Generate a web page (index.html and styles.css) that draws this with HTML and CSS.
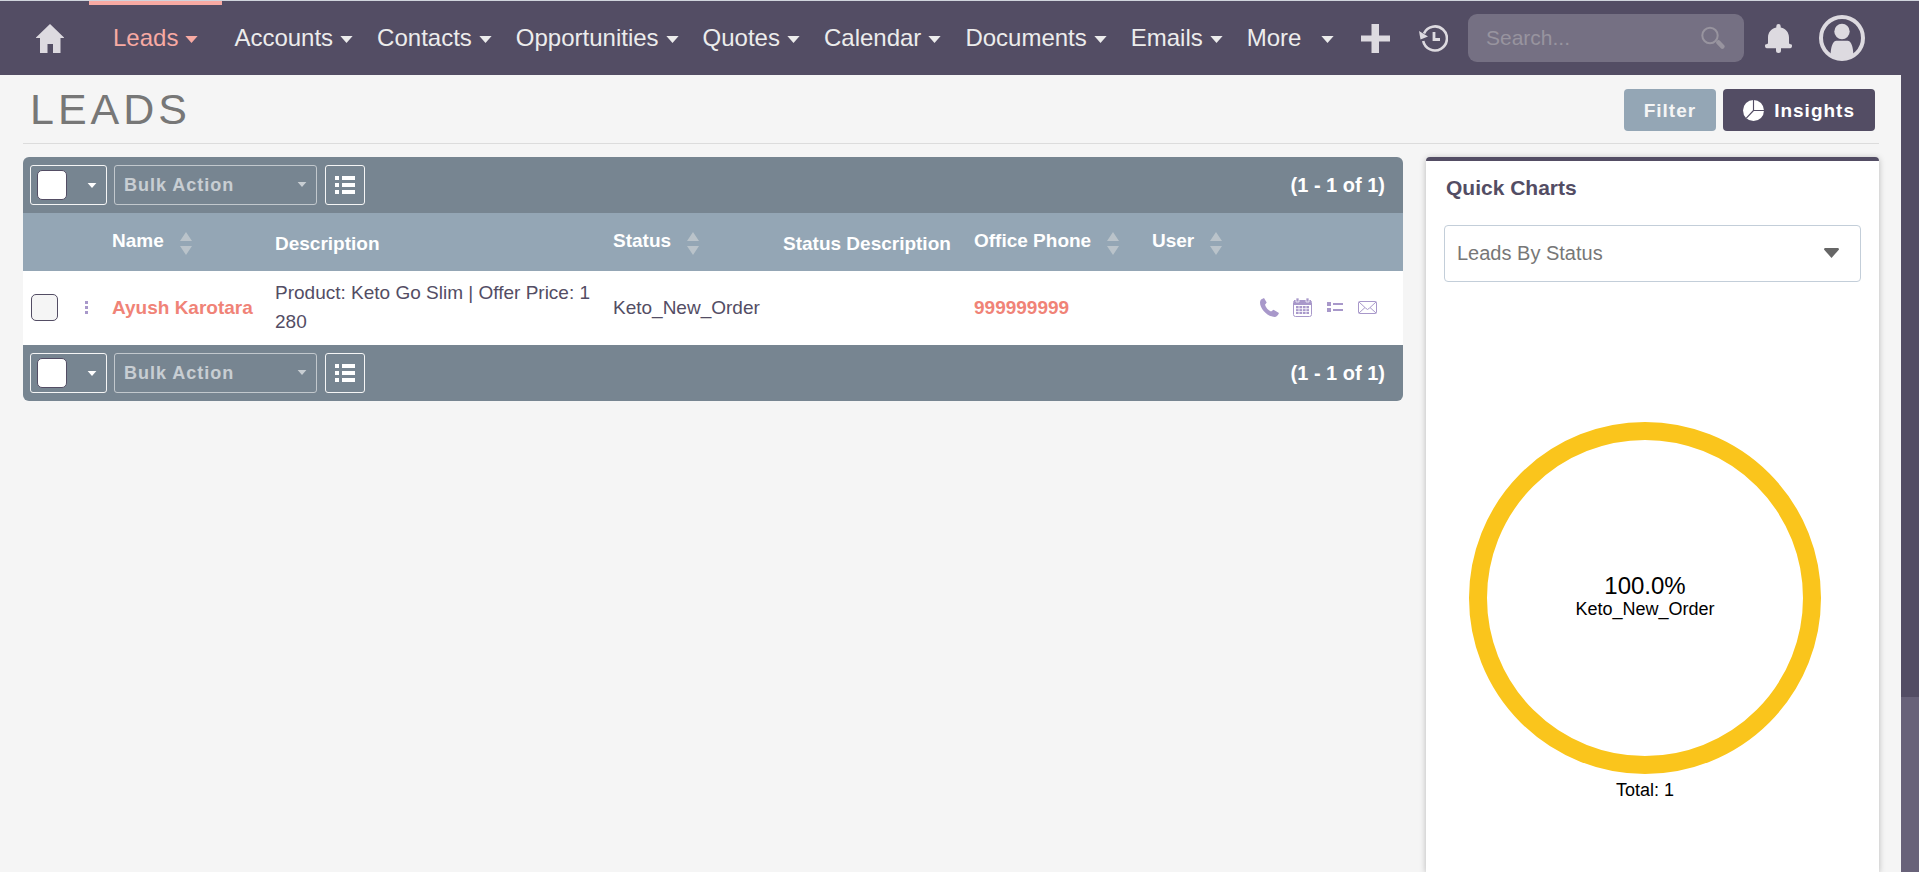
FILE: index.html
```html
<!DOCTYPE html>
<html lang="en">
<head>
<meta charset="utf-8">
<title>Leads</title>
<link rel="stylesheet" href="styles.css">
</head>
<body>
<svg class="sprite" aria-hidden="true">
  <symbol id="caret" viewBox="0 0 14 8"><path d="M0 0h14L7 8z"/></symbol>
  <symbol id="sort" viewBox="0 0 12 26"><path d="M6 2l6 9H0zM0 16h12l-6 9z"/></symbol>
  <symbol id="list" viewBox="0 0 20 18"><path d="M0 0h4v4H0zM7 0h13v4H7zM0 7h4v4H0zM7 7h13v4H7zM0 14h4v4H0zM7 14h13v4H7z"/></symbol>
</svg>

<header class="topbar">
  <a class="home" href="#" aria-label="Home">
    <svg width="28" height="29" viewBox="0 0 28 29"><path d="M14 0L28 13.500V14H24.500V29H17V20H11.500V29H4V14H0V13.500z"/></svg>
  </a>
  <nav class="nav">
    <a class="tab active" href="#">Leads<svg class="caret"><use href="#caret"/></svg></a>
    <a class="tab" href="#">Accounts<svg class="caret"><use href="#caret"/></svg></a>
    <a class="tab" href="#">Contacts<svg class="caret"><use href="#caret"/></svg></a>
    <a class="tab" href="#">Opportunities<svg class="caret"><use href="#caret"/></svg></a>
    <a class="tab" href="#">Quotes<svg class="caret"><use href="#caret"/></svg></a>
    <a class="tab" href="#">Calendar<svg class="caret"><use href="#caret"/></svg></a>
    <a class="tab" href="#">Documents<svg class="caret"><use href="#caret"/></svg></a>
    <a class="tab" href="#">Emails<svg class="caret"><use href="#caret"/></svg></a>
    <a class="tab more" href="#">More<svg class="caret"><use href="#caret"/></svg></a>
  </nav>
  <div class="tools">
    <button class="tool create" type="button" aria-label="Create">
      <svg width="29" height="29" viewBox="0 0 29 29"><path d="M10.500 0h7.500v11.500H29v6H18V29h-7.500V17.500H0v-6h10.500z"/></svg>
    </button>
    <button class="tool" type="button" aria-label="Recently viewed">
      <svg width="29" height="28" viewBox="0 0 29 28"><path d="M5 9.500A12 12 0 1 1 4.200 17" fill="none" stroke="#dddae0" stroke-width="2.600"/><path d="M0 7l1.500 8.500 7.500-3z"/><path d="M15 8v7.500h6" fill="none" stroke="#dddae0" stroke-width="2.800"/></svg>
    </button>
    <form class="search">
      <input class="search-input" type="search" placeholder="Search..." aria-label="Search">
      <button class="search-go" type="button" aria-label="Run search">
        <svg width="24" height="24" viewBox="0 0 24 24"><circle cx="9" cy="9.500" r="7.700" fill="none" stroke="#98949f" stroke-width="2"/><path d="M17.500 16.500l3.800 4" stroke="#98949f" stroke-width="4.600" stroke-linecap="round"/></svg>
      </button>
    </form>
    <button class="tool bell" type="button" aria-label="Notifications">
      <svg width="27" height="29" viewBox="0 0 27 29"><path d="M13.500 0a2.200 2.200 0 0 1 2.200 2.200V3.500c5 1 8.300 4.800 8.300 10V19.500l1.500.8c1.300 0 1.700 1 1.500 2-.2 1.200-.8 1.900-1.700 1.900H16v2.300a2.500 2.500 0 0 1-5 0V24.200H1.700C.8 24.200.2 23.500 0 22.300c-.2-1 .2-2 1.500-2L3 19.500V13.500c0-5.200 3.300-9 8.300-10V2.200A2.200 2.200 0 0 1 13.500 0z"/></svg>
    </button>
    <button class="tool" type="button" aria-label="Profile">
      <svg width="46" height="46" viewBox="0 0 46 46"><circle cx="23" cy="23" r="21" fill="none" stroke="#dddae0" stroke-width="4"/><circle cx="23" cy="16.500" r="7.700"/><path d="M11.500 41c.3-7 1.200-11 3-13.500 1-1.500 2.500-1.700 4-1.700h9c1.500 0 3 .2 4 1.700 1.800 2.500 2.700 6.500 3 13.500A22 22 0 0 1 11.500 41z"/></svg>
    </button>
  </div>
</header>

<div class="shell">
  <main class="page">
    <div class="title-row">
      <h1 class="title">LEADS</h1>
      <div class="actions">
        <button class="btn filter" type="button">Filter</button>
        <button class="btn insights" type="button">
          <svg width="21" height="21" viewBox="0 0 22 22"><circle cx="11" cy="11" r="11" fill="#fff"/><path d="M11 0v11h11M11 11l-7.500 8" fill="none" stroke="#534d64" stroke-width="1.200"/></svg>Insights</button>
      </div>
    </div>
    <div class="columns">
      <section class="list">
        <div class="bar">
          <div class="select-all">
            <input class="check big" type="checkbox" aria-label="Select all">
            <button class="drop" type="button" aria-label="Selection options"><svg class="small-caret"><use href="#caret"/></svg></button>
          </div>
          <div class="bulk">
            <select class="bulk-select" aria-label="Bulk Action"><option>Bulk Action</option></select>
            <svg class="small-caret bulk-caret"><use href="#caret"/></svg>
          </div>
          <button class="chooser" type="button" aria-label="Choose columns"><svg width="20" height="18"><use href="#list"/></svg></button>
          <span class="pager">(1 - 1 of 1)</span>
        </div>
        <table class="leads">
          <colgroup><col class="c-check"><col class="c-name"><col class="c-desc"><col class="c-status"><col class="c-sdesc"><col class="c-phone"><col class="c-user"><col class="c-icons"></colgroup>
          <thead>
            <tr>
              <td></td>
              <th><a class="sort" href="#">Name<svg><use href="#sort"/></svg></a></th>
              <th>Description</th>
              <th><a class="sort" href="#">Status<svg><use href="#sort"/></svg></a></th>
              <th>Status Description</th>
              <th><a class="sort" href="#">Office Phone<svg><use href="#sort"/></svg></a></th>
              <th><a class="sort" href="#">User<svg><use href="#sort"/></svg></a></th>
              <td></td>
            </tr>
          </thead>
          <tbody>
            <tr>
              <td class="pick"><div class="pick-row">
                <input class="check" type="checkbox" aria-label="Select Ayush Karotara">
                <button class="dots" type="button" aria-label="Row actions"><svg width="3" height="13" viewBox="0 0 3 13"><path d="M0 0h3v3H0zM0 5h3v3H0zM0 10h3v3H0z"/></svg></button>
              </div></td>
              <td><a class="link" href="#">Ayush Karotara</a></td>
              <td>Product: Keto Go Slim | Offer Price: 1 280</td>
              <td>Keto_New_Order</td>
              <td></td>
              <td><a class="link" href="#">999999999</a></td>
              <td></td>
              <td><div class="row-icons">
                <a href="#" aria-label="Log call"><svg width="19" height="19" viewBox="0 0 19 19"><path d="M1 1.500L4 0l2.700 4.500L5 6.800c.8 2.800 3 5.300 6 6.700l2.500-1.700L19 15c-.8 2.200-2.400 4-4.500 4C7.500 18.500 0 11 0 4.500 0 3.400.3 2.300 1 1.500z"/></svg></a>
                <a href="#" aria-label="Schedule meeting"><svg width="19" height="19" viewBox="0 0 19 19"><rect x=".5" y="2.500" width="18" height="16" rx="2" fill="#fff" stroke="#a898ca"/><path d="M1 2h17v5H1z"/><path d="M3 0h3v4H3zM13 0h3v4h-3z" stroke="#fff" stroke-width=".7"/><path d="M3 8h13v8H3z"/><path d="M3 10.700h13M3 13.500h13M6 8v8M9.500 8v8M13 8v8" stroke="#fff" stroke-width=".8"/></svg></a>
                <a href="#" aria-label="Create task"><svg width="18" height="12" viewBox="-1 0 18 12"><path d="M0 1h4v4H0zM6 2h10v2H6zM0 7h4v4H0zM6 8h10v2H6z"/></svg></a>
                <a href="#" aria-label="Send email"><svg width="19" height="13" viewBox="0 0 19 13"><g fill="none" stroke="#a898ca"><rect x=".5" y=".5" width="18" height="12" rx="1"/><path d="M1 1l6.500 6 2 1.500 2-1.500L18 1M1 12l6-5.500M18 12l-6-5.500"/></g></svg></a>
              </div></td>
            </tr>
          </tbody>
        </table>
        <div class="bar">
          <div class="select-all">
            <input class="check big" type="checkbox" aria-label="Select all">
            <button class="drop" type="button" aria-label="Selection options"><svg class="small-caret"><use href="#caret"/></svg></button>
          </div>
          <div class="bulk">
            <select class="bulk-select" aria-label="Bulk Action"><option>Bulk Action</option></select>
            <svg class="small-caret bulk-caret"><use href="#caret"/></svg>
          </div>
          <button class="chooser" type="button" aria-label="Choose columns"><svg width="20" height="18"><use href="#list"/></svg></button>
          <span class="pager">(1 - 1 of 1)</span>
        </div>
      </section>
      <aside class="charts">
        <h2 class="charts-title">Quick Charts</h2>
        <div class="chart-picker">
          <select class="chart-select" aria-label="Chart"><option>Leads By Status</option></select>
          <svg class="chart-caret" viewBox="0 0 15 10"><path d="M1 0h13q1 0 1 1.500L7.500 10 0 1.500Q0 0 1 0z"/></svg>
        </div>
        <svg class="donut" width="402" height="540" viewBox="0 0 402 540" role="img" aria-label="Leads by status">
          <circle cx="201" cy="316" r="167" fill="none" stroke="#fac51c" stroke-width="18"/>
          <text class="donut-value" x="201" y="312">100.0%</text>
          <text class="donut-label" x="201" y="333">Keto_New_Order</text>
          <text class="donut-label" x="201" y="514">Total: 1</text>
        </svg>
      </aside>
    </div>
  </main>
  <div class="scroll-track"><div class="scroll-thumb"></div></div>
</div>
</body>
</html>
```

FILE: styles.css
```css
* { box-sizing: border-box; }
body {
  margin: 0;
  height: 100vh;
  overflow: hidden;
  display: flex;
  flex-direction: column;
  background: #f5f5f5;
  color: #534d64;
  font: 19px/29px "Liberation Sans", Arial, sans-serif;
}
button, input, select { font: inherit; color: inherit; margin: 0; }
button { padding: 0; border: 0; background: none; }
a { color: inherit; text-decoration: none; }
svg { display: block; fill: currentColor; }
.sprite { display: none; }

/* top bar */
.topbar {
  flex: none;
  display: flex;
  align-items: center;
  height: 75px;
  padding: 0 54px 0 36px;
  border-top: 1px solid #d0d4dc;
  background: #534d64;
  color: #dddae0;
}
.home { margin-right: 25px; }
.nav { display: flex; align-self: stretch; }
.tab {
  display: flex;
  align-items: center;
  gap: 7px;
  padding: 0 12px 2px;
  color: #ececec;
  font-size: 24px;
  white-space: nowrap;
}
.tab.active {
  padding: 0 24px 6px;
  border-top: 4px solid #f8aaa3;
  color: #f8aaa3;
}
.tab.more { gap: 20px; }
.caret { width: 13px; height: 7px; margin-top: 4px; }
.tools { display: flex; align-items: center; margin-left: auto; }
.create { margin-right: 29px; }
.search {
  display: flex;
  align-items: center;
  width: 276px;
  height: 48px;
  margin: 0 21px 0 20px;
  padding: 0 19px 0 18px;
  border-radius: 9px;
  background: #757083;
}
.search-input {
  flex: 1;
  min-width: 0;
  padding: 0 0 2px;
  border: 0;
  outline: 0;
  background: none;
  font-size: 21px;
}
.search-input::placeholder { color: #98949f; }
.bell { margin-right: 27px; }

/* page */
.shell { flex: 1; min-height: 0; display: flex; }
.page {
  flex: 1;
  min-width: 0;
  display: flex;
  flex-direction: column;
  padding: 0 22px 0 23px;
}
.title-row {
  display: flex;
  align-items: center;
  justify-content: space-between;
  height: 69px;
  padding: 2px 4px 0 7px;
  border-bottom: 1px solid #dcdcdc;
}
.title {
  margin: 0;
  padding-bottom: 3px;
  color: #777;
  font-size: 43px;
  font-weight: 400;
  line-height: 48px;
  letter-spacing: 4px;
}
.actions { display: flex; gap: 7px; }
.btn {
  display: flex;
  align-items: center;
  gap: 10px;
  height: 42px;
  padding: 0 20px;
  border-radius: 4px;
  color: #f5f5f5;
  font-weight: 700;
  letter-spacing: 1px;
}
.filter { background: #94a6b5; }
.insights { background: #534d64; color: #fff; }
.columns {
  flex: 1;
  min-height: 0;
  display: flex;
  align-items: flex-start;
  gap: 23px;
  padding-top: 13px;
}

/* list */
.list { flex: 1; min-width: 0; border-radius: 6px; overflow: hidden; }
.bar {
  display: flex;
  align-items: center;
  height: 56px;
  padding: 0 18px 0 7px;
  background: #778591;
  color: #fff;
}
.select-all {
  display: flex;
  align-items: center;
  width: 77px;
  height: 40px;
  margin-right: 7px;
  padding: 0 9px 0 6px;
  border: 1px solid #f5f5f5;
  border-radius: 3px;
}
.drop { margin-left: auto; }
.small-caret { width: 10px; height: 5px; }
.check {
  appearance: none;
  width: 27px;
  height: 27px;
  border: 1px solid #534d64;
  border-radius: 5px;
  background: #f5f5f5;
}
.check.big { width: 30px; height: 30px; background: #fff; }
.bulk { position: relative; width: 203px; margin-right: 8px; opacity: .6; }
.bulk-select {
  appearance: none;
  display: block;
  width: 100%;
  height: 40px;
  padding: 0 9px;
  border: 1px solid #f5f5f5;
  border-radius: 3px;
  background: none;
  font-size: 18px;
  font-weight: 700;
  letter-spacing: 1px;
}
.bulk-caret { position: absolute; right: 10px; top: 17px; pointer-events: none; }
.chooser {
  display: grid;
  place-items: center;
  width: 40px;
  height: 40px;
  border: 1px solid #f5f5f5;
  border-radius: 3px;
}
.pager { margin-left: auto; font-size: 20px; font-weight: 700; }

.leads { width: 100%; table-layout: fixed; border-collapse: collapse; background: #fff; }
.c-check { width: 81px; }
.c-name { width: 163px; }
.c-status { width: 170px; }
.c-sdesc { width: 191px; }
.c-phone { width: 178px; }
.c-user { width: 108px; }
.c-icons { width: 151px; }
.leads th, .leads td { padding: 7px 0 9px 8px; text-align: left; }
.leads thead { background: #94a6b5; color: #fff; }
.leads thead tr { height: 58px; }
.leads th { padding: 9px 0 7px 8px; white-space: nowrap; }
.leads tbody tr { height: 74px; }
.sort { display: flex; align-items: flex-start; gap: 16px; line-height: 22px; }
.sort svg { width: 12px; height: 26px; fill: #bac3ca; }
.pick-row { display: flex; align-items: center; gap: 27px; }
.dots { color: #a898ca; }
.link { color: #f08377; font-weight: 700; }
.row-icons { display: flex; align-items: center; gap: 14px; color: #a898ca; }

/* charts */
.charts {
  flex: none;
  align-self: stretch;
  width: 453px;
  padding: 12px 18px 0;
  border-top: 4px solid #534d64;
  border-radius: 4px 4px 0 0;
  background: #fff;
  box-shadow: 0 1px 6px rgba(0, 0, 0, .25);
}
.charts-title { margin: 0 0 23px 2px; font-size: 21px; line-height: 29px; }
.chart-picker { position: relative; }
.chart-select {
  appearance: none;
  display: block;
  width: 100%;
  height: 57px;
  padding: 0 12px;
  border: 1px solid #c3ced9;
  border-radius: 4px;
  background: #fff;
  color: #777;
  font-size: 20px;
}
.chart-caret {
  position: absolute;
  right: 22px;
  top: 23px;
  width: 15px;
  height: 10px;
  fill: #666;
  pointer-events: none;
}
.donut text { fill: #000; text-anchor: middle; }
.donut-value { font-size: 24px; }
.donut-label { font-size: 18px; }

.scroll-track { flex: none; width: 18px; background: #686279; }
.scroll-thumb { height: 78%; background: #534d64; }
```
